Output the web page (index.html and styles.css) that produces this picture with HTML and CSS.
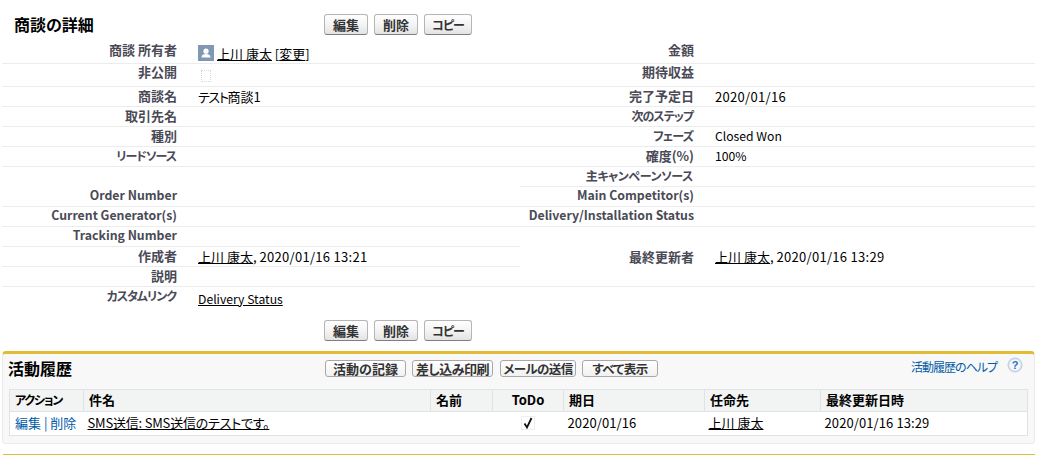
FILE: index.html
```html
<!DOCTYPE html>
<html lang="ja">
<head>
<meta charset="utf-8">
<title>商談の詳細</title>
<link rel="stylesheet" href="styles.css">
</head>
<body>
<section class="detail">
  <div class="bar top">
    <h2 class="title">商談の詳細</h2>
    <div class="btns"><button class="btn b44">編集</button><button class="btn b44">削除</button><button class="btn b48 kana3">コピー</button></div>
  </div>
  <div class="cols">
    <div class="col">
      <div class="row r1 line"><span class="lab">商談 所有者</span><span class="val owner"><svg class="avatar" viewBox="0 0 16 16"><rect width="16" height="16" fill="#7f99b3"/><circle cx="8" cy="6.200" r="2.600" fill="#fff"/><path d="M3.500 12.500c0-2.400 2-3.400 4.500-3.400s4.500 1 4.500 3.400z" fill="#fff"/></svg><a class="lnk">上川 康太</a> [<a class="lnk">変更</a>]</span></div>
      <div class="row r2 line"><span class="lab up">非公開</span><span class="val"><i class="chk"></i></span></div>
      <div class="row line"><span class="lab">商談名</span><span class="val"><span class="tight">テスト</span>商談1</span></div>
      <div class="row line"><span class="lab">取引先名</span><span class="val"></span></div>
      <div class="row line"><span class="lab">種別</span><span class="val"></span></div>
      <div class="row line"><span class="lab kana">リードソース</span><span class="val"></span></div>
      <div class="row"><span class="lab"></span><span class="val"></span></div>
      <div class="row line"><span class="lab en">Order Number</span><span class="val"></span></div>
      <div class="row line"><span class="lab en">Current Generator(s)</span><span class="val"></span></div>
      <div class="row line"><span class="lab en">Tracking Number</span><span class="val"></span></div>
      <div class="row line"><span class="lab">作成者</span><span class="val"><a class="lnk">上川 康太</a>, <span class="num">2020/01/16 13:21</span></span></div>
      <div class="row line"><span class="lab">説明</span><span class="val"></span></div>
      <div class="row r-last"><span class="lab kana">カスタムリンク</span><span class="val down"><a class="lnk latin">Delivery Status</a></span></div>
    </div>
    <div class="col">
      <div class="row r1 line"><span class="lab">金額</span><span class="val"></span></div>
      <div class="row r2 line"><span class="lab up">期待収益</span><span class="val"></span></div>
      <div class="row line"><span class="lab">完了予定日</span><span class="val num">2020/01/16</span></div>
      <div class="row line"><span class="lab kana">次のステップ</span><span class="val"></span></div>
      <div class="row line"><span class="lab kana">フェーズ</span><span class="val latin">Closed Won</span></div>
      <div class="row line"><span class="lab">確度(%)</span><span class="val latin">100%</span></div>
      <div class="row line"><span class="lab kana long">主キャンペーンソース</span><span class="val"></span></div>
      <div class="row line"><span class="lab en">Main Competitor(s)</span><span class="val"></span></div>
      <div class="row line"><span class="lab en">Delivery/Installation Status</span><span class="val"></span></div>
      <div class="row r-tall line"><span class="lab">最終更新者</span><span class="val"><a class="lnk">上川 康太</a>, <span class="num">2020/01/16 13:29</span></span></div>
    </div>
  </div>
  <div class="bar bottom">
    <div class="btns"><button class="btn b44">編集</button><button class="btn b44">削除</button><button class="btn b48 kana3">コピー</button></div>
  </div>
</section>
<section class="panel">
  <div class="phead">
    <h3 class="ptitle">活動履歴</h3>
    <div class="pbtns"><button class="btn small w81">活動の記録</button><button class="btn small w81 s5">差し込み印刷</button><button class="btn small w76 s10 shift">メールの送信</button><button class="btn small w76 s10">すべて表示</button></div>
    <div class="help"><a class="hlink">活動履歴のヘルプ</a><svg class="qmark" viewBox="0 0 16 16"><circle cx="8" cy="8" r="7" fill="#d6e0f0" stroke="#bccbe2"/><circle cx="8" cy="8" r="5.500" fill="#f4f7fb"/><text x="8" y="11.500" text-anchor="middle" class="qtext">?</text></svg></div>
  </div>
  <table class="list">
    <colgroup><col class="c1"><col class="c2"><col class="c3"><col class="c4"><col class="c5"><col class="c6"><col class="c7"></colgroup>
    <thead><tr><th class="kana">アクション</th><th>件名</th><th>名前</th><th class="ctr">ToDo</th><th>期日</th><th>任命先</th><th>最終更新日時</th></tr></thead>
    <tbody><tr>
      <td class="act"><a class="blue">編集</a> | <a class="blue">削除</a></td>
      <td><a class="lnk subj">SMS送信: SMS送信のテストです。</a></td>
      <td></td>
      <td class="ctr"><svg class="tick" viewBox="0 0 14 14"><rect x=".5" y=".5" width="13" height="13" fill="none" stroke="#ddd" stroke-dasharray="1 1"/><path d="M3.500 7.500 6 11.500 10.500 2" fill="none" stroke="#111" stroke-width="1.800"/></svg></td>
      <td class="num">2020/01/16</td>
      <td><a class="lnk">上川 康太</a></td>
      <td class="num">2020/01/16 13:29</td>
    </tr></tbody>
  </table>
</section>
<div class="next"></div>
</body>
</html>
```

FILE: styles.css
```css
* { box-sizing: border-box; }
html, body { margin: 0; padding: 0; background: #fff; overflow: hidden; }
body { width: 1041px; height: 455px; font-family: "Noto Sans CJK JP", "Liberation Sans", sans-serif; font-size: 13px; color: #000; font-feature-settings: "palt"; }
.detail { padding: 0 0 0 2px; width: 1035px; }
.bar { display: flex; align-items: flex-start; }
.bar.top { height: 42px; padding-top: 14px; }
.bar.bottom { height: 29px; padding: 9px 0 0 322px; }
.title { margin: 0; width: 322px; padding-left: 12px; font-size: 16px; line-height: 20px; font-weight: 700; color: #000; }
.btns { display: flex; gap: 6px; }
.btn { height: 21px; padding: 0; border: 1px solid #b5b5b5; border-bottom-color: #7f7f7f; border-radius: 3px; background: linear-gradient(#fff, #f4f4f4 50%, #e3e3e3); font: 700 13px/17px "Noto Sans CJK JP", sans-serif; font-feature-settings: "palt"; color: #333; white-space: nowrap; }
.b44 { width: 44px; }
.b48 { width: 48px; }
.kana3 { font-size: 12px; letter-spacing: -1px; }
.cols { display: flex; }
.col { flex: 1 1 0; min-width: 0; }
.col:first-child { flex: 0 0 518px; }
.row { display: flex; height: 20px; }
.row.line { border-bottom: 1px solid #ececec; }
.r1 { height: 22px !important; }
.r1 .lab { line-height: 15px; }
.r2 { height: 23px !important; }
.r-tall { height: 60px !important; align-items: center; }
.r-last { height: 24px !important; }
.lab { flex: none; width: 175px; text-align: right; font-weight: 700; font-size: 13px; line-height: 17px; color: #4a4a56; white-space: nowrap; }
.lab.en { font-size: 12.300px; }
.lab.up { line-height: 15px; }
.lab.kana { font-size: 12px; letter-spacing: -1px; padding-right: 1px; }
.lab.long { letter-spacing: -.400px; padding-right: 1px; }
.val { flex: 1; padding-left: 21px; font-size: 13px; line-height: 19px; white-space: nowrap; color: #000; }
.col:last-child .lab { width: 174px; }
.owner { display: flex; align-items: center; white-space: pre; padding-top: 1px; }
.avatar { width: 16px; height: 16px; margin-right: 3px; }
.lnk { color: #000; text-decoration: underline; }
.num { letter-spacing: .3px; }
.tight { letter-spacing: -1.300px; }
.subj { letter-spacing: -.2px; }
.latin { font-size: 12.200px; }
.chk { display: block; width: 10px; height: 12px; margin: 6px 0 0 3px; border: 1px dotted #d8d8d8; }
.down { padding-top: 2px; }
.panel { margin: 11px 0 0 2px; width: 1033px; height: 93px; border: 1px solid #eaeaea; border-top: 3px solid #e3bc36; border-radius: 4px; background: #f8f8f8; padding: 6px 6px 0; }
.phead { display: flex; height: 29px; align-items: flex-start; }
.ptitle { margin: 0 0 0 -1px; width: 317px; font-size: 16px; line-height: 16px; font-weight: 700; color: #000; }
.pbtns { display: flex; gap: 6px; }
.small { height: 17px; line-height: 14px; background: linear-gradient(#fff, #f1f1f1); border-color: #a8a8a8; color: #333; }
.w81 { width: 81px; }
.w76 { width: 76px; }
.s5 { letter-spacing: -.5px; }
.s10 { font-size: 12.500px; letter-spacing: -.600px; }
.shift { margin-left: 1px; }
.help { margin-left: auto; display: flex; align-items: flex-start; gap: 10px; padding-right: 5px; margin-top: -3px; }
.hlink { color: #015ba7; font-size: 12px; line-height: 20px; letter-spacing: -1px; }
.qmark { width: 16px; height: 16px; }
.qtext { font: 700 11px "Liberation Sans", sans-serif; fill: #2a6fc0; }
.list { width: 1019px; border-collapse: collapse; table-layout: fixed; background: #fff; border: 1px solid #e0e3e5; }
.c1 { width: 74px; } .c2 { width: 347px; } .c3 { width: 62px; } .c4 { width: 71px; } .c5 { width: 141px; } .c6 { width: 116px; } .c7 { width: auto; }
.list th { height: 22px; padding: 0 0 2px 5px; text-align: left; font-size: 13px; line-height: 16px; font-weight: 700; background: #f2f3f3; border-right: 1px solid #e0e3e5; border-bottom: 1px solid #e0e3e5; color: #000; white-space: nowrap; }
.list th.kana { font-size: 12px; letter-spacing: -1.200px; }
.list th:last-child { border-right: 0; }
.list td { height: 24px; padding: 0 0 2px 4px; font-size: 13px; line-height: 16px; white-space: nowrap; vertical-align: middle; }
.list td.num { letter-spacing: .1px; }
.list .ctr { text-align: center; padding-left: 0; }
.act { color: #015ba7; }
.list .act { padding-left: 5px; }
.blue { color: #015ba7; }
.tick { width: 14px; height: 14px; display: block; margin: 0 auto; }
.next { margin: 10px 0 0 3px; width: 1032px; height: 1px; background: #e3bc36; }
```
